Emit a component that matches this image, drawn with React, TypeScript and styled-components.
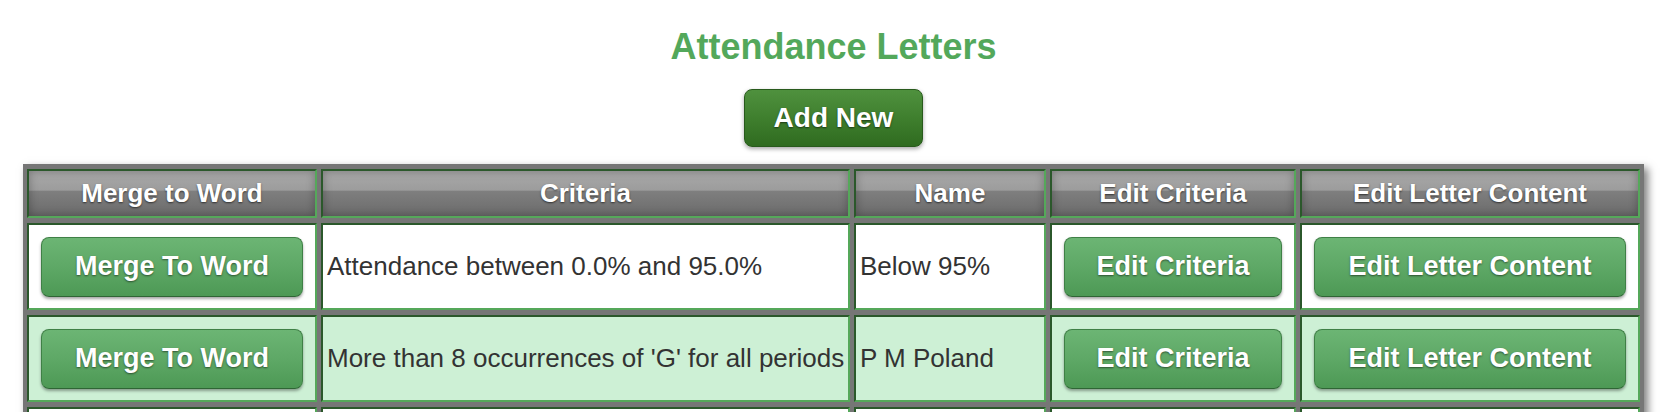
import React from "react";
import styled, { createGlobalStyle } from "styled-components";

const GlobalStyle = createGlobalStyle`
  html, body {
    margin: 0;
    padding: 0;
    background: #ffffff;
  }
  body {
    font-family: "Liberation Sans", Arial, Helvetica, sans-serif;
  }
`;

const Page = styled.div`
  width: 1621px;
  margin-left: 23px;
  padding-top: 26px;
`;

const Title = styled.h1`
  margin: 0;
  text-align: center;
  font-size: 36px;
  line-height: 41px;
  font-weight: bold;
  color: #53a85b;
`;

const Toolbar = styled.div`
  display: flex;
  justify-content: center;
  margin-top: 22px;
`;

const AddButton = styled.button`
  height: 58px;
  padding: 0 29px;
  border: 1px solid #285a1c;
  border-radius: 8px;
  background: linear-gradient(to bottom, #4f913e 0%, #3f7f2e 50%, #2f6b20 100%);
  color: #ffffff;
  font-family: inherit;
  font-size: 28px;
  font-weight: bold;
  text-shadow: 0 1px 2px rgba(0, 0, 0, 0.55);
  box-shadow: 0 2px 4px rgba(0, 0, 0, 0.35);
  cursor: pointer;
`;

const Table = styled.table`
  margin-top: 17px;
  width: 1621px;
  table-layout: fixed;
  border-collapse: separate;
  border-spacing: 4px 5px;
  background: #767676;
  box-shadow: 4px 4px 8px rgba(0, 0, 0, 0.5);
`;

const HeadCell = styled.th<{ $w: number }>`
  box-sizing: border-box;
  width: ${(p) => p.$w}px;
  height: 49px;
  padding: 0;
  border: 2px solid;
  border-color: #2b582b #55a85a #55a85a #2b582b;
  background: linear-gradient(
    to bottom,
    #a9a9a9 0%,
    #9c9c9c 43%,
    #7f7f7f 44%,
    #6b6b6b 100%
  );
  box-shadow: inset 0 0 10px rgba(0, 0, 0, 0.3);
  color: #ffffff;
  font-size: 26px;
  font-weight: bold;
  text-align: center;
  vertical-align: middle;
  text-shadow: 0 1px 2px rgba(0, 0, 0, 0.6);
  white-space: nowrap;
`;

const Row = styled.tr<{ $alt: boolean }>`
  background: ${(p) => (p.$alt ? "#cdf0d5" : "#ffffff")};
`;

const Cell = styled.td<{ $action?: boolean }>`
  box-sizing: border-box;
  height: 87px;
  padding: ${(p) => (p.$action ? "0 12px" : "0 4px")};
  border: 2px solid;
  border-color: #2b582b #55a85a #55a85a #2b582b;
  font-size: 26px;
  color: #333333;
  vertical-align: middle;
  white-space: nowrap;
  overflow: hidden;
`;

const RowButton = styled.button`
  display: block;
  box-sizing: border-box;
  width: 100%;
  height: 60px;
  padding: 0;
  border: 1px solid #3f8046;
  border-bottom-color: #2f6535;
  border-radius: 8px;
  background: linear-gradient(to bottom, #6cb574 0%, #5ea866 50%, #4d9955 100%);
  color: #ffffff;
  font-family: inherit;
  font-size: 27px;
  font-weight: bold;
  text-shadow: 0 1px 2px rgba(0, 0, 0, 0.5);
  box-shadow: 0 2px 3px rgba(0, 0, 0, 0.35);
  cursor: pointer;
`;

const columns = [
  { label: "Merge to Word", w: 290 },
  { label: "Criteria", w: 529 },
  { label: "Name", w: 192 },
  { label: "Edit Criteria", w: 246 },
  { label: "Edit Letter Content", w: 340 },
];

type Letter = { criteria: string; name: string } | null;

const letters: Letter[] = [
  { criteria: "Attendance between 0.0% and 95.0%", name: "Below 95%" },
  { criteria: "More than 8 occurrences of 'G' for all periods", name: "P M Poland" },
  null,
];

export default function App() {
  return (
    <>
      <GlobalStyle />
      <Page>
        <Title>Attendance Letters</Title>
        <Toolbar>
          <AddButton>Add New</AddButton>
        </Toolbar>
        <Table>
          <thead>
            <tr>
              {columns.map((c) => (
                <HeadCell key={c.label} $w={c.w}>
                  {c.label}
                </HeadCell>
              ))}
            </tr>
          </thead>
          <tbody>
            {letters.map((l, i) =>
              l ? (
                <Row key={i} $alt={i % 2 === 1}>
                  <Cell $action>
                    <RowButton>Merge To Word</RowButton>
                  </Cell>
                  <Cell>{l.criteria}</Cell>
                  <Cell>{l.name}</Cell>
                  <Cell $action>
                    <RowButton>Edit Criteria</RowButton>
                  </Cell>
                  <Cell $action>
                    <RowButton>Edit Letter Content</RowButton>
                  </Cell>
                </Row>
              ) : (
                <Row key={i} $alt={i % 2 === 1}>
                  {columns.map((c) => (
                    <Cell key={c.label} />
                  ))}
                </Row>
              )
            )}
          </tbody>
        </Table>
      </Page>
    </>
  );
}
